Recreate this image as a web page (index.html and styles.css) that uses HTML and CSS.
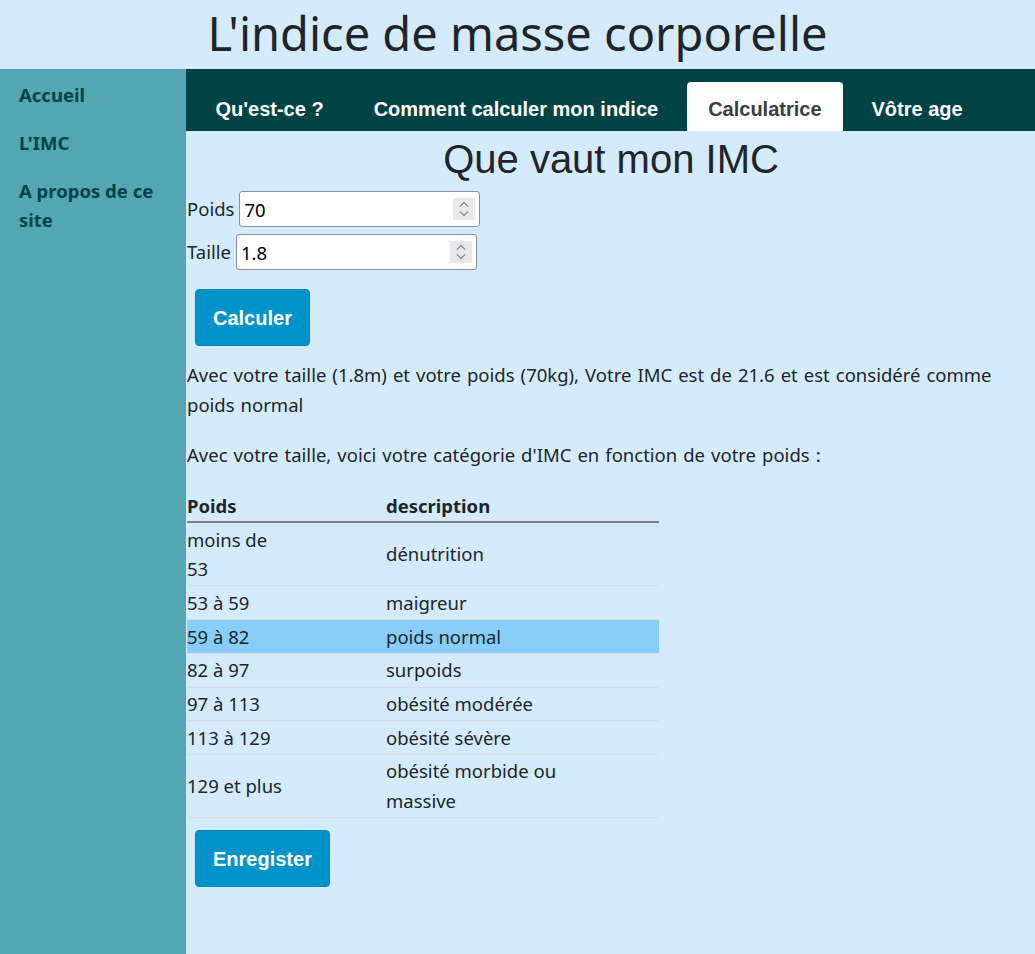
FILE: index.html
```html
<!DOCTYPE html>
<html lang="fr">
<head>
<meta charset="utf-8">
<title>L'indice de masse corporelle</title>
<link rel="stylesheet" href="styles.css">
</head>
<body>
<header class="site-header">
  <h1 class="site-title">L'indice de masse corporelle</h1>
</header>
<div class="layout">
  <aside class="sidebar">
    <a class="side-link" href="#">Accueil</a>
    <a class="side-link" href="#">L'IMC</a>
    <a class="side-link" href="#">A propos de ce site</a>
  </aside>
  <main class="main">
    <nav class="tabs">
      <a class="tab" href="#">Qu'est-ce ?</a>
      <a class="tab" href="#">Comment calculer mon indice</a>
      <a class="tab tab-active" href="#">Calculatrice</a>
      <a class="tab" href="#">Vôtre age</a>
    </nav>
    <section class="content">
      <h2 class="page-title">Que vaut mon IMC</h2>
      <form class="calc-form">
        <div class="form-row">
          <label class="form-label">Poids</label>
          <div class="num-field">
            <input class="num-input" type="text" value="70">
            <span class="spinner"><svg width="14" height="18" viewBox="0 0 14 18"><path d="M3 6.5 L7 2.5 L11 6.5" fill="none" stroke="#8a8a8f" stroke-width="1.3"/><path d="M3 11.5 L7 15.5 L11 11.5" fill="none" stroke="#8a8a8f" stroke-width="1.3"/></svg></span>
          </div>
        </div>
        <div class="form-row">
          <label class="form-label">Taille</label>
          <div class="num-field">
            <input class="num-input" type="text" value="1.8">
            <span class="spinner"><svg width="14" height="18" viewBox="0 0 14 18"><path d="M3 6.5 L7 2.5 L11 6.5" fill="none" stroke="#8a8a8f" stroke-width="1.3"/><path d="M3 11.5 L7 15.5 L11 11.5" fill="none" stroke="#8a8a8f" stroke-width="1.3"/></svg></span>
          </div>
        </div>
        <button class="btn btn-calc" type="button">Calculer</button>
      </form>
      <p class="result">Avec votre taille (1.8m) et votre poids (70kg), Votre IMC est de 21.6 et est considéré comme poids normal</p>
      <p class="result">Avec votre taille, voici votre catégorie d'IMC en fonction de votre poids :</p>
      <table class="imc-table">
        <thead>
          <tr><th class="col-a">Poids</th><th class="col-b">description</th></tr>
        </thead>
        <tbody>
          <tr><td class="col-a">moins de<br>53</td><td class="col-b">dénutrition</td></tr>
          <tr><td class="col-a">53 à 59</td><td class="col-b">maigreur</td></tr>
          <tr class="row-current"><td class="col-a">59 à 82</td><td class="col-b">poids normal</td></tr>
          <tr><td class="col-a">82 à 97</td><td class="col-b">surpoids</td></tr>
          <tr><td class="col-a">97 à 113</td><td class="col-b">obésité modérée</td></tr>
          <tr><td class="col-a">113 à 129</td><td class="col-b">obésité sévère</td></tr>
          <tr><td class="col-a">129 et plus</td><td class="col-b">obésité morbide ou<br>massive</td></tr>
        </tbody>
      </table>
      <button class="btn btn-save" type="button">Enregister</button>
    </section>
  </main>
</div>
</body>
</html>
```
FILE: styles.css
```css
* { box-sizing: border-box; }

html, body {
  margin: 0;
  padding: 0;
  height: 100%;
}

body {
  background: #d4ebfd;
  color: #212529;
  font-family: "Noto Sans", "Open Sans", sans-serif;
  font-size: 18.5px;
  line-height: 1.6;
  display: flex;
  flex-direction: column;
}

.site-header {
  height: 69px;
  display: flex;
  align-items: center;
  justify-content: center;
}

.site-title {
  margin: 0;
  font-weight: 400;
  font-size: 47px;
  line-height: 1;
  color: #212529;
  padding-bottom: 2px;
}

.layout {
  flex: 1;
  display: flex;
}

.sidebar {
  width: 186px;
  flex: none;
  background: #52a7b3;
  padding: 11px 19px 0 19px;
  display: flex;
  flex-direction: column;
  gap: 19px;
}

.side-link {
  color: #004346;
  font-weight: 700;
  text-decoration: none;
  line-height: 29px;
}

.main {
  flex: 1;
  display: flex;
  flex-direction: column;
}

.tabs {
  background: #004346;
  height: 62px;
  display: flex;
  align-items: flex-end;
  padding-left: 8px;
  gap: 7px;
}

.tab {
  font-family: "Liberation Sans", Arial, sans-serif;
  font-weight: 700;
  font-size: 20px;
  line-height: 1;
  color: #ffffff;
  text-decoration: none;
  height: 49px;
  padding: 4px 21.5px 0 21.5px;
  display: flex;
  align-items: center;
  border-radius: 4px 4px 0 0;
}

.tab-active {
  background: #ffffff;
  color: #3d3d3f;
}

.content {
  padding: 0 0 0 1px;
}

.page-title {
  font-family: "Liberation Sans", Arial, sans-serif;
  font-weight: 400;
  font-size: 40px;
  line-height: 46px;
  margin: 5px 0 9px 0;
  text-align: center;
  color: #212529;
}

.calc-form {
  display: flex;
  flex-direction: column;
  align-items: flex-start;
  gap: 7px;
}

.form-row {
  display: flex;
  align-items: center;
  gap: 5px;
}

.num-field {
  width: 241px;
  height: 36px;
  background: #ffffff;
  border: 1px solid #8f8f9d;
  border-radius: 3px;
  display: flex;
  align-items: center;
  padding: 0 4px 0 4px;
}

.num-input {
  flex: 1;
  min-width: 0;
  border: 0;
  outline: 0;
  background: transparent;
  font-family: "Noto Sans", sans-serif;
  font-size: 18.5px;
  color: #000000;
  padding: 0;
}

.spinner {
  width: 22px;
  height: 22px;
  background: #e9e9ed;
  display: flex;
  align-items: center;
  justify-content: center;
}

.btn {
  font-family: "Liberation Sans", Arial, sans-serif;
  font-weight: 700;
  font-size: 20px;
  color: #ffffff;
  background: #0093c9;
  border: 1px solid #0a86b6;
  border-radius: 4px;
  height: 57px;
  padding: 2px 17px 0 17px;
  margin-left: 8px;
  cursor: pointer;
}

.btn-calc {
  margin-top: 12px;
}

.result {
  margin: 14px 0 20px 0;
  line-height: 30px;
  word-spacing: 1.2px;
}

.result + .result {
  margin-top: 0;
  margin-bottom: 21px;
}

.imc-table {
  border-collapse: collapse;
  width: 472px;
}

.imc-table th {
  text-align: left;
  font-weight: 700;
  padding: 0;
  line-height: 30px;
  border-bottom: 2px solid #808080;
}

.imc-table td {
  padding: 1.5px 0;
  line-height: 29.7px;
  border-bottom: 1px solid #d9dde1;
  vertical-align: middle;
}

.col-a { width: 199px; }
.col-b { width: 273px; }

.row-current td {
  background: #87cefa;
}

.btn-save {
  margin-top: 12px;
}
```
